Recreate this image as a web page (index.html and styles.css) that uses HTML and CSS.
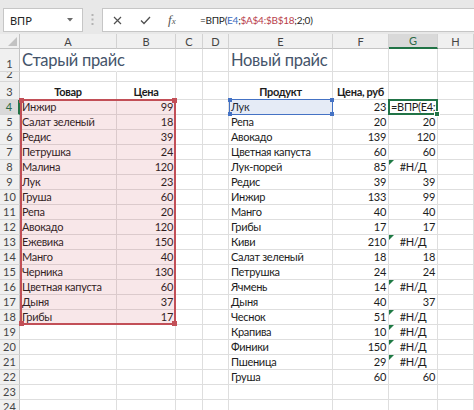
FILE: index.html
```html
<!DOCTYPE html>
<html lang="ru">
<head>
<meta charset="utf-8">
<title>ВПР</title>
<link rel="stylesheet" href="styles.css">
</head>
<body>
<div class="fbar">
  <div class="namebox"><span>ВПР</span><svg class="caret" width="6" height="4" viewBox="0 0 6 4"><path d="M0 0H6L3 3.5Z" fill="#6a6a6a"/></svg></div>
  <svg class="grip" width="3" height="11" viewBox="0 0 3 11"><rect x="0.5" y="0" width="2" height="2" fill="#b3b3b3"/><rect x="0.5" y="4.5" width="2" height="2" fill="#b3b3b3"/><rect x="0.5" y="9" width="2" height="2" fill="#b3b3b3"/></svg>
  <div class="fbox">
    <div class="btns">
      <svg class="ic-x" width="9" height="9" viewBox="0 0 9 9"><path d="M1 1L8 8M8 1L1 8" stroke="#505050" stroke-width="1.2" fill="none"/></svg>
      <svg class="ic-ok" width="11" height="9" viewBox="0 0 11 9"><path d="M1 4.5L4 7.5L10 1" stroke="#505050" stroke-width="1.3" fill="none"/></svg>
      <span class="fx">f<span class="fx-x">x</span></span>
    </div>
    <div class="formula">=ВПР(<span class="ref1">E4</span>;<span class="ref2">$A$4:$B$18</span>;2;0)</div>
  </div>
</div>
<div class="sheet">
  <div class="cells">
    <div class="corner"></div><div class="hd">A</div><div class="hd">B</div><div class="hd">C</div><div class="hd">D</div><div class="hd">E</div><div class="hd">F</div><div class="hd on">G</div><div class="hd">H</div>
    <div class="rh">1</div><div class="c t ov">Старый прайс</div><div class="c"></div><div class="c"></div><div class="c"></div><div class="c t">Новый прайс</div><div class="c"></div><div class="c"></div><div class="c"></div>
    <div class="rh">2</div><div class="c"></div><div class="c"></div><div class="c"></div><div class="c"></div><div class="c"></div><div class="c"></div><div class="c"></div><div class="c"></div>
    <div class="rh">3</div><div class="c h">Товар</div><div class="c h">Цена</div><div class="c"></div><div class="c"></div><div class="c h">Продукт</div><div class="c h">Цена, руб</div><div class="c"></div><div class="c"></div>
    <div class="rh on">4</div><div class="c">Инжир</div><div class="c n">99</div><div class="c"></div><div class="c"></div><div class="c">Лук</div><div class="c n">23</div><div class="c">=ВПР(E4;$A$4:$B$18;2;0)</div><div class="c"></div>
    <div class="rh">5</div><div class="c">Салат зеленый</div><div class="c n">18</div><div class="c"></div><div class="c"></div><div class="c">Репа</div><div class="c n">20</div><div class="c n">20</div><div class="c"></div>
    <div class="rh">6</div><div class="c">Редис</div><div class="c n">39</div><div class="c"></div><div class="c"></div><div class="c">Авокадо</div><div class="c n">139</div><div class="c n">120</div><div class="c"></div>
    <div class="rh">7</div><div class="c">Петрушка</div><div class="c n">24</div><div class="c"></div><div class="c"></div><div class="c">Цветная капуста</div><div class="c n">60</div><div class="c n">60</div><div class="c"></div>
    <div class="rh">8</div><div class="c">Малина</div><div class="c n">120</div><div class="c"></div><div class="c"></div><div class="c">Лук-порей</div><div class="c n">85</div><div class="c e">#Н/Д</div><div class="c"></div>
    <div class="rh">9</div><div class="c">Лук</div><div class="c n">23</div><div class="c"></div><div class="c"></div><div class="c">Редис</div><div class="c n">39</div><div class="c n">39</div><div class="c"></div>
    <div class="rh">10</div><div class="c">Груша</div><div class="c n">60</div><div class="c"></div><div class="c"></div><div class="c">Инжир</div><div class="c n">133</div><div class="c n">99</div><div class="c"></div>
    <div class="rh">11</div><div class="c">Репа</div><div class="c n">20</div><div class="c"></div><div class="c"></div><div class="c">Манго</div><div class="c n">40</div><div class="c n">40</div><div class="c"></div>
    <div class="rh">12</div><div class="c">Авокадо</div><div class="c n">120</div><div class="c"></div><div class="c"></div><div class="c">Грибы</div><div class="c n">17</div><div class="c n">17</div><div class="c"></div>
    <div class="rh">13</div><div class="c">Ежевика</div><div class="c n">150</div><div class="c"></div><div class="c"></div><div class="c">Киви</div><div class="c n">210</div><div class="c e">#Н/Д</div><div class="c"></div>
    <div class="rh">14</div><div class="c">Манго</div><div class="c n">40</div><div class="c"></div><div class="c"></div><div class="c">Салат зеленый</div><div class="c n">18</div><div class="c n">18</div><div class="c"></div>
    <div class="rh">15</div><div class="c">Черника</div><div class="c n">130</div><div class="c"></div><div class="c"></div><div class="c">Петрушка</div><div class="c n">24</div><div class="c n">24</div><div class="c"></div>
    <div class="rh">16</div><div class="c">Цветная капуста</div><div class="c n">60</div><div class="c"></div><div class="c"></div><div class="c">Ячмень</div><div class="c n">14</div><div class="c e">#Н/Д</div><div class="c"></div>
    <div class="rh">17</div><div class="c">Дыня</div><div class="c n">37</div><div class="c"></div><div class="c"></div><div class="c">Дыня</div><div class="c n">40</div><div class="c n">37</div><div class="c"></div>
    <div class="rh">18</div><div class="c">Грибы</div><div class="c n">17</div><div class="c"></div><div class="c"></div><div class="c">Чеснок</div><div class="c n">51</div><div class="c e">#Н/Д</div><div class="c"></div>
    <div class="rh">19</div><div class="c"></div><div class="c"></div><div class="c"></div><div class="c"></div><div class="c">Крапива</div><div class="c n">10</div><div class="c e">#Н/Д</div><div class="c"></div>
    <div class="rh">20</div><div class="c"></div><div class="c"></div><div class="c"></div><div class="c"></div><div class="c">Финики</div><div class="c n">150</div><div class="c e">#Н/Д</div><div class="c"></div>
    <div class="rh">21</div><div class="c"></div><div class="c"></div><div class="c"></div><div class="c"></div><div class="c">Пшеница</div><div class="c n">29</div><div class="c e">#Н/Д</div><div class="c"></div>
    <div class="rh">22</div><div class="c"></div><div class="c"></div><div class="c"></div><div class="c"></div><div class="c">Груша</div><div class="c n">60</div><div class="c n">60</div><div class="c"></div>
    <div class="rh">23</div><div class="c"></div><div class="c"></div><div class="c"></div><div class="c"></div><div class="c"></div><div class="c"></div><div class="c"></div><div class="c"></div>
    <div class="rh">24</div><div class="c"></div><div class="c"></div><div class="c"></div><div class="c"></div><div class="c"></div><div class="c"></div><div class="c"></div><div class="c"></div>
  </div>
  <div class="marks">
    <div class="rng"><i class="hnd tl"></i><i class="hnd tr"></i><i class="hnd bl"></i><i class="hnd br"></i></div>
    <div class="sel"><i class="bh tl"></i><i class="bh tr"></i><i class="bh bl"></i><i class="bh br"></i></div>
    <div class="act"><i class="fh"></i></div>
  </div>
</div>
</body>
</html>
```

FILE: styles.css
```css
* { box-sizing: border-box; }
html, body { margin: 0; padding: 0; }
body {
  width: 474px;
  height: 410px;
  overflow: hidden;
  background: #fff;
  font-family: Lato, "Noto Sans", "Liberation Sans", sans-serif;
  color: #1c1c1c;
}

/* formula bar */
.fbar {
  height: 34px;
  background: #e8e8e8;
  display: flex;
  align-items: flex-start;
  padding: 8px 0 0 3px;
}
.namebox {
  width: 80px;
  height: 24px;
  background: #fff;
  border: 1px solid #c6c6c6;
  display: flex;
  align-items: center;
  justify-content: space-between;
  padding: 0 9px 0 6px;
  font-size: 11px;
  color: #262626;
}
.grip { margin: 6px 8px 0 8px; }
.fbox {
  flex: 1;
  height: 24px;
  background: #fff;
  border: 1px solid #c6c6c6;
  border-right: none;
  display: flex;
  align-items: center;
}
.btns {
  display: flex;
  align-items: center;
  width: 96px;
  height: 100%;
  padding-left: 10px;
}
.ic-x { margin-right: 18px; }
.ic-ok { margin-right: 17px; }
.fx {
  font-family: "Liberation Serif", serif;
  font-style: italic;
  font-size: 13px;
  color: #555;
}
.fx-x { font-size: 9px; }
.formula {
  padding-left: 1px;
  font-size: 10px;
  letter-spacing: -0.25px;
  color: #262626;
  white-space: nowrap;
}
.ref1 { color: #3d6cc0; }
.ref2 { color: #b8404b; }

/* sheet */
.sheet { display: grid; }
.cells, .marks {
  grid-area: 1 / 1;
  display: grid;
  grid-template-columns: 20px 97px 59px 27px 26px 104px 56px 49px 1fr;
  grid-template-rows: 15px 23px 10px 17.5px repeat(21, 15.05px);
}
.marks { pointer-events: none; }

.corner {
  background: #f0f0f0;
  border-right: 1px solid #c4c4c4;
  border-bottom: 1px solid #c4c4c4;
  display: flex;
  align-items: flex-end;
  justify-content: flex-end;
  padding: 0 2px 2px 0;
}
.corner::after {
  content: "";
  border-left: 9px solid transparent;
  border-bottom: 9px solid #c2c2c2;
}
.hd {
  background: #f0f0f0;
  border-right: 1px solid #d2d2d2;
  border-bottom: 1px solid #c4c4c4;
  display: flex;
  align-items: center;
  justify-content: center;
  font-size: 11px;
  color: #444;
}
.hd.on {
  background: #d9d9d9;
  border-bottom: 2px solid #217346;
  color: #2b6a46;
}
.rh {
  background: #f0f0f0;
  border-right: 1px solid #c4c4c4;
  border-bottom: 1px solid #d6d6d6;
  display: flex;
  align-items: flex-end;
  justify-content: center;
  font-size: 11px;
  line-height: 13px;
  padding-bottom: 1px;
  color: #444;
  overflow: hidden;
}
.rh.on {
  background: #d9d9d9;
  border-right: 2px solid #217346;
  color: #2b6a46;
}

.c {
  position: relative;
  border-right: 1px solid #dedede;
  border-bottom: 1px solid #dedede;
  display: flex;
  align-items: flex-end;
  padding: 0 2px 1px 2px;
  font-size: 11px;
  letter-spacing: -0.3px;
  line-height: 13px;
  white-space: nowrap;
  overflow: hidden;
}
.c.n { justify-content: flex-end; }
.c.h { justify-content: center; font-weight: 700; }
.c.e { justify-content: center; }
.c.e::before {
  content: "";
  position: absolute;
  left: 0;
  top: 0;
  border-top: 5px solid #1f7a45;
  border-right: 5px solid transparent;
}
.c.t {
  font-size: 16.5px;
  font-weight: 400;
  letter-spacing: -0.3px;
  line-height: 22px;
  padding-bottom: 0;
  color: #44546a;
  overflow: visible;
}
.c.ov { border-right-color: transparent; }

/* reference highlights */
.rng {
  grid-area: 5 / 2 / 20 / 4;
  position: relative;
  margin-top: -1px;
  background: rgba(200, 60, 70, 0.12);
  border: 2px solid #c24f57;
}
.hnd {
  position: absolute;
  width: 5px;
  height: 5px;
  background: #c24f57;
}
.hnd.tl { left: -3px; top: -3px; }
.hnd.tr { right: -3px; top: -3px; }
.hnd.bl { left: -3px; bottom: -3px; }
.hnd.br { right: -3px; bottom: -3px; }

.sel {
  grid-area: 5 / 6 / 6 / 7;
  position: relative;
  margin-top: -1px;
  background: rgba(70, 110, 190, 0.14);
  border: 1px solid #4472c4;
}
.bh {
  position: absolute;
  width: 4px;
  height: 4px;
  background: #4472c4;
}
.bh.tl { left: -2px; top: -2px; }
.bh.tr { right: -2px; top: -2px; }
.bh.bl { left: -2px; bottom: -2px; }
.bh.br { right: -2px; bottom: -2px; }

.act {
  grid-area: 5 / 8 / 6 / 9;
  position: relative;
  margin: -1px 0 0 -1px;
  border: 2px solid #217346;
}
.fh {
  position: absolute;
  right: -4px;
  bottom: -4px;
  width: 6px;
  height: 6px;
  background: #217346;
  border: 1px solid #fff;
}
```
